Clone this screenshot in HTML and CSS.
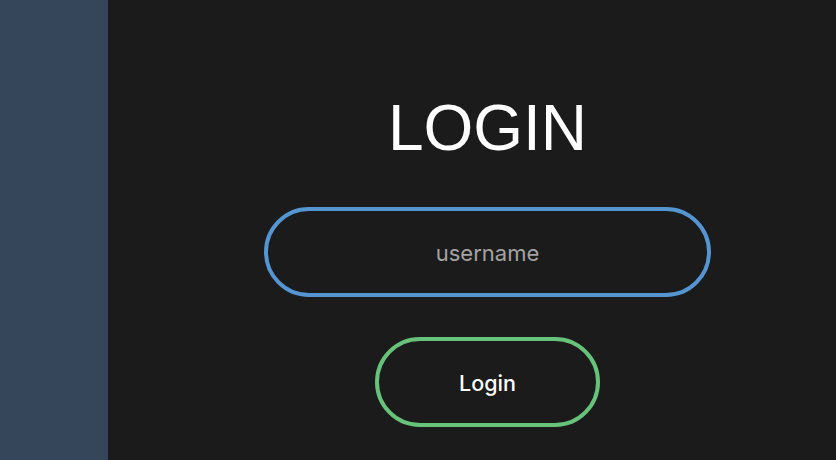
FILE: index.html
```html
<!DOCTYPE html>
<html>
<head>
<meta charset="utf-8">
<link rel="stylesheet" href="styles.css">
</head>
<body>
<div class="app">
  <aside class="sidebar"></aside>
  <main class="main">
    <h1 class="title">LOGIN</h1>
    <input class="field" type="text" placeholder="username">
    <button class="btn">Login</button>
  </main>
</div>
</body>
</html>
```
FILE: styles.css
```css
html, body {
  margin: 0;
  padding: 0;
  background: #1b1b1b;
  height: 100%;
  overflow: hidden;
}
.app {
  display: flex;
  height: 460px;
}
.sidebar {
  width: 108px;
  flex: none;
  background: #36465a;
}
.main {
  flex: 1;
  display: flex;
  flex-direction: column;
  align-items: center;
  padding-left: 31px;
  padding-top: 91px;
  background: #1b1b1b;
}
.title {
  margin: 0;
  font-family: "Liberation Sans", Arial, sans-serif;
  font-weight: 400;
  font-size: 64px;
  line-height: 74px;
  color: #ffffff;
}
.field {
  box-sizing: border-box;
  margin-top: 42px;
  width: 447px;
  height: 90px;
  padding: 2px 0 0 0;
  border: 4px solid #5596d2;
  border-radius: 45px;
  background: transparent;
  color: #ffffff;
  font-family: Inter, "Noto Sans", sans-serif;
  font-size: 22px;
  text-align: center;
  outline: none;
}
.field::placeholder {
  color: #a3a3a3;
}
.btn {
  box-sizing: border-box;
  margin-top: 40px;
  width: 225px;
  height: 90px;
  padding: 2px 0 0 0;
  border: 4px solid #67c27a;
  border-radius: 45px;
  background: transparent;
  color: #ffffff;
  font-family: Inter, "Noto Sans", sans-serif;
  font-size: 21.5px;
  font-weight: 500;
  cursor: pointer;
}
```
